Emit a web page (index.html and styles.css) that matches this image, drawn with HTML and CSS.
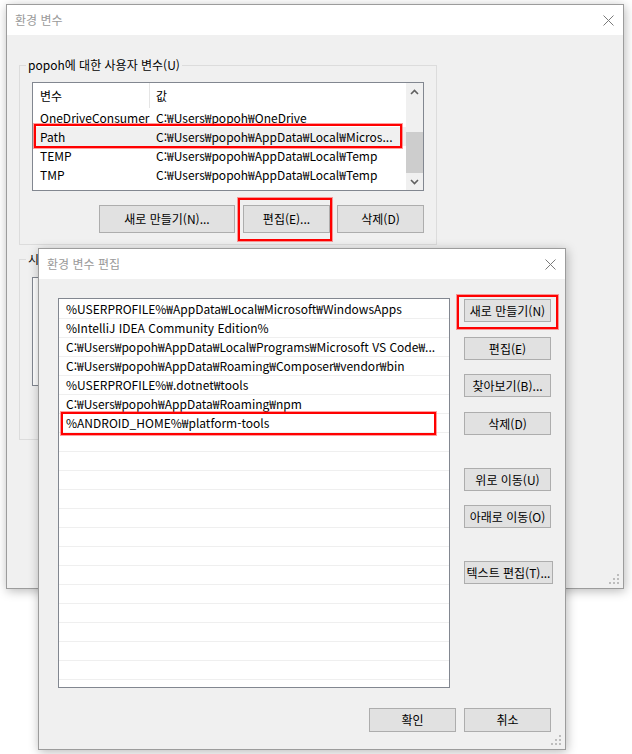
FILE: index.html
```html
<!DOCTYPE html>
<html lang="ko">
<head>
<meta charset="utf-8">
<title>환경 변수</title>
<link rel="stylesheet" href="styles.css">
</head>
<body>
<div class="desk">

  <div class="win win-env">
    <div class="titlebar">
      <span class="title">환경 변수</span>
      <svg class="close" width="11" height="11" viewBox="0 0 11 11"><path d="M0.5 0.5 L10.5 10.5 M10.5 0.5 L0.5 10.5" stroke="#7a7a7a" stroke-width="1" fill="none"/></svg>
    </div>
    <div class="env-body">
      <div class="group">
        <div class="group-label">popoh에 대한 사용자 변수(U)</div>
        <div class="lv lv-first">
          <div class="lv-main">
            <div class="lv-header"><span class="hcol1">변수</span><span class="col2">값</span></div>
            <div class="lv-row"><span class="col1">OneDriveConsumer</span><span class="col2">C:₩Users₩popoh₩OneDrive</span></div>
            <div class="lv-row lv-row-sel"><span class="col1">Path</span><span class="col2">C:₩Users₩popoh₩AppData₩Local₩Micros...</span></div>
            <div class="lv-row"><span class="col1">TEMP</span><span class="col2">C:₩Users₩popoh₩AppData₩Local₩Temp</span></div>
            <div class="lv-row"><span class="col1">TMP</span><span class="col2">C:₩Users₩popoh₩AppData₩Local₩Temp</span></div>
          </div>
          <div class="vscroll">
            <div class="sb-arrow"><svg width="9" height="6" viewBox="0 0 9 6"><path d="M1 5 L4.5 1.5 L8 5" fill="none" stroke="#606060" stroke-width="1.6"/></svg></div>
            <div class="sb-track"><div class="sb-thumb"></div></div>
            <div class="sb-arrow"><svg width="9" height="6" viewBox="0 0 9 6"><path d="M1 1 L4.5 4.5 L8 1" fill="none" stroke="#606060" stroke-width="1.6"/></svg></div>
          </div>
        </div>
        <div class="btn-row">
          <button class="btn btn-new">새로 만들기(N)...</button>
          <button class="btn btn-edit">편집(E)...</button>
          <button class="btn btn-del">삭제(D)</button>
        </div>
      </div>

      <div class="group group-sys">
        <div class="group-label">시스템 변수(S)</div>
        <div class="lv lv-second"></div>
        <div class="btn-row btn-row-hidden"></div>
      </div>
    </div>
    <svg class="grip" width="11" height="11" viewBox="0 0 11 11"><g fill="#bdbdbd"><rect x="8" y="0" width="2" height="2"/><rect x="4" y="4" width="2" height="2"/><rect x="8" y="4" width="2" height="2"/><rect x="0" y="8" width="2" height="2"/><rect x="4" y="8" width="2" height="2"/><rect x="8" y="8" width="2" height="2"/></g></svg>
  </div>

  <div class="win win-edit">
    <div class="titlebar">
      <span class="title">환경 변수 편집</span>
      <svg class="close" width="11" height="11" viewBox="0 0 11 11"><path d="M0.5 0.5 L10.5 10.5 M10.5 0.5 L0.5 10.5" stroke="#7a7a7a" stroke-width="1" fill="none"/></svg>
    </div>
    <div class="edit-main">
      <div class="plist">
        <div class="prow">%USERPROFILE%₩AppData₩Local₩Microsoft₩WindowsApps</div>
        <div class="prow">%IntelliJ IDEA Community Edition%</div>
        <div class="prow">C:₩Users₩popoh₩AppData₩Local₩Programs₩Microsoft VS Code₩...</div>
        <div class="prow">C:₩Users₩popoh₩AppData₩Roaming₩Composer₩vendor₩bin</div>
        <div class="prow">%USERPROFILE%₩.dotnet₩tools</div>
        <div class="prow">C:₩Users₩popoh₩AppData₩Roaming₩npm</div>
        <div class="prow">%ANDROID_HOME%₩platform-tools</div>
        <div class="prow"></div><div class="prow"></div><div class="prow"></div>
        <div class="prow"></div><div class="prow"></div><div class="prow"></div>
        <div class="prow"></div><div class="prow"></div><div class="prow"></div>
        <div class="prow"></div><div class="prow"></div><div class="prow"></div>
        <div class="prow"></div><div class="prow"></div>
      </div>
      <div class="side">
        <button class="btn sbtn">새로 만들기(N)</button>
        <button class="btn sbtn s2">편집(E)</button>
        <button class="btn sbtn s3">찾아보기(B)...</button>
        <button class="btn sbtn s4">삭제(D)</button>
        <button class="btn sbtn s5">위로 이동(U)</button>
        <button class="btn sbtn s6">아래로 이동(O)</button>
        <button class="btn sbtn s7">텍스트 편집(T)...</button>
      </div>
    </div>
    <div class="edit-foot">
      <button class="btn fbtn">확인</button>
      <button class="btn fbtn f2">취소</button>
    </div>
    <svg class="grip" width="11" height="11" viewBox="0 0 11 11"><g fill="#bdbdbd"><rect x="8" y="0" width="2" height="2"/><rect x="4" y="4" width="2" height="2"/><rect x="8" y="4" width="2" height="2"/><rect x="0" y="8" width="2" height="2"/><rect x="4" y="8" width="2" height="2"/><rect x="8" y="8" width="2" height="2"/></g></svg>
  </div>

  <div class="mark mark-path"></div>
  <div class="mark mark-edit"></div>
  <div class="mark mark-new"></div>
  <div class="mark mark-android"></div>
</div>
</body>
</html>
```

FILE: styles.css
```css
* { box-sizing: border-box; }
html, body { margin: 0; padding: 0; }
body {
  width: 632px;
  height: 754px;
  overflow: hidden;
  background: #ffffff;
  font-family: "Noto Sans CJK KR", "Malgun Gothic", sans-serif;
  font-size: 12px;
  line-height: 16px;
  color: #000;
}
.desk { position: relative; width: 632px; height: 754px; }

.win {
  position: absolute;
  background: #f0f0f0;
  border: 1px solid #9c9c9c;
  box-shadow: 1px 2px 10px rgba(0, 0, 0, 0.28);
  display: flex;
  flex-direction: column;
}
.win-env { left: 6px; top: 4px; width: 618px; height: 585px; }
.win-edit { left: 38px; top: 248px; width: 528px; height: 502px; }

.titlebar {
  flex: none;
  height: 30px;
  background: #fff;
  display: flex;
  align-items: center;
  justify-content: space-between;
  padding: 0 9px 0 8px;
}
.title { color: #9a9a9a; }
.close { display: block; }

.env-body { padding: 30px 0 0 12px; display: flex; flex-direction: column; }

.group {
  width: 418px;
  border: 1px solid #dcdcdc;
  padding: 0 12px 11px;
  display: flex;
  flex-direction: column;
}
.group-sys { margin-top: 14px; }
.group-label {
  align-self: flex-start;
  height: 16px;
  margin: -9px 0 0 -6px;
  padding: 0 2px;
  background: #f0f0f0;
  white-space: nowrap;
}

.lv {
  width: 392px;
  height: 109px;
  border: 1px solid #828790;
  background: #fff;
  display: flex;
  overflow: hidden;
}
.lv-first { margin-top: 9px; }
.lv-second { margin-top: 10px; }
.lv-main { flex: 1; min-width: 0; }
.lv-header { height: 25px; display: flex; align-items: center; }
.hcol1 {
  width: 117px;
  padding-left: 7px;
  border-right: 1px solid #e5e5e5;
  align-self: stretch;
  display: flex;
  align-items: center;
}
.lv-row { height: 19px; display: flex; align-items: center; white-space: nowrap; }
.lv-row-sel { background: #f0f0f0; }
.col1 { width: 117px; padding-left: 7px; flex: none; }
.col2 { padding-left: 6px; white-space: nowrap; }

.vscroll { width: 17px; flex: none; background: #f0f0f0; display: flex; flex-direction: column; }
.sb-arrow { height: 17px; flex: none; display: flex; align-items: center; justify-content: center; }
.sb-arrow svg { display: block; }
.sb-track { flex: 1; display: flex; flex-direction: column; justify-content: flex-end; }
.sb-thumb { height: 41px; background: #cdcdcd; }

.btn {
  font: inherit;
  color: #000;
  background: #e1e1e1;
  border: 1px solid #adadad;
  padding: 0;
  margin: 0;
  display: flex;
  align-items: center;
  justify-content: center;
  white-space: nowrap;
}
.btn-row { display: flex; justify-content: flex-end; margin-top: 14px; }
.btn-row .btn { height: 28px; }
.btn-row-hidden { height: 28px; }
.btn-new { width: 136px; }
.btn-edit { width: 87px; margin-left: 8px; }
.btn-del { width: 87px; margin-left: 7px; }

.edit-main { display: flex; padding: 19px 0 0 19px; }
.plist {
  width: 392px;
  height: 390px;
  border: 1px solid #828790;
  background: #fff;
  padding-top: 1px;
  overflow: hidden;
  flex: none;
}
.prow {
  height: 19px;
  border-bottom: 1px solid #efefef;
  padding-left: 7px;
  line-height: 18px;
  white-space: nowrap;
  overflow: hidden;
}
.side { margin-left: 14px; padding-top: 1px; display: flex; flex-direction: column; align-items: flex-start; }
.sbtn { width: 87px; height: 23px; }
.s2, .s4 { margin-top: 15px; }
.s3, .s6 { margin-top: 14px; }
.s5, .s7 { margin-top: 33px; }
.s7 { width: 89px; }

.edit-foot { display: flex; justify-content: flex-end; padding-right: 14px; margin-top: 20px; }
.fbtn { width: 87px; height: 24px; }
.f2 { margin-left: 8px; }

.grip { position: absolute; right: 3px; bottom: 3px; }

.mark {
  position: absolute;
  border: 2px solid #ff0000;
  box-shadow: 0 0 0 1px rgba(255, 40, 40, 0.45);
}
.mark-path { left: 34px; top: 124px; width: 368px; height: 24px; }
.mark-edit { left: 238px; top: 198px; width: 94px; height: 43px; }
.mark-new { left: 457px; top: 295px; width: 101px; height: 34px; }
.mark-android { left: 61px; top: 412px; width: 375px; height: 23px; }
```
